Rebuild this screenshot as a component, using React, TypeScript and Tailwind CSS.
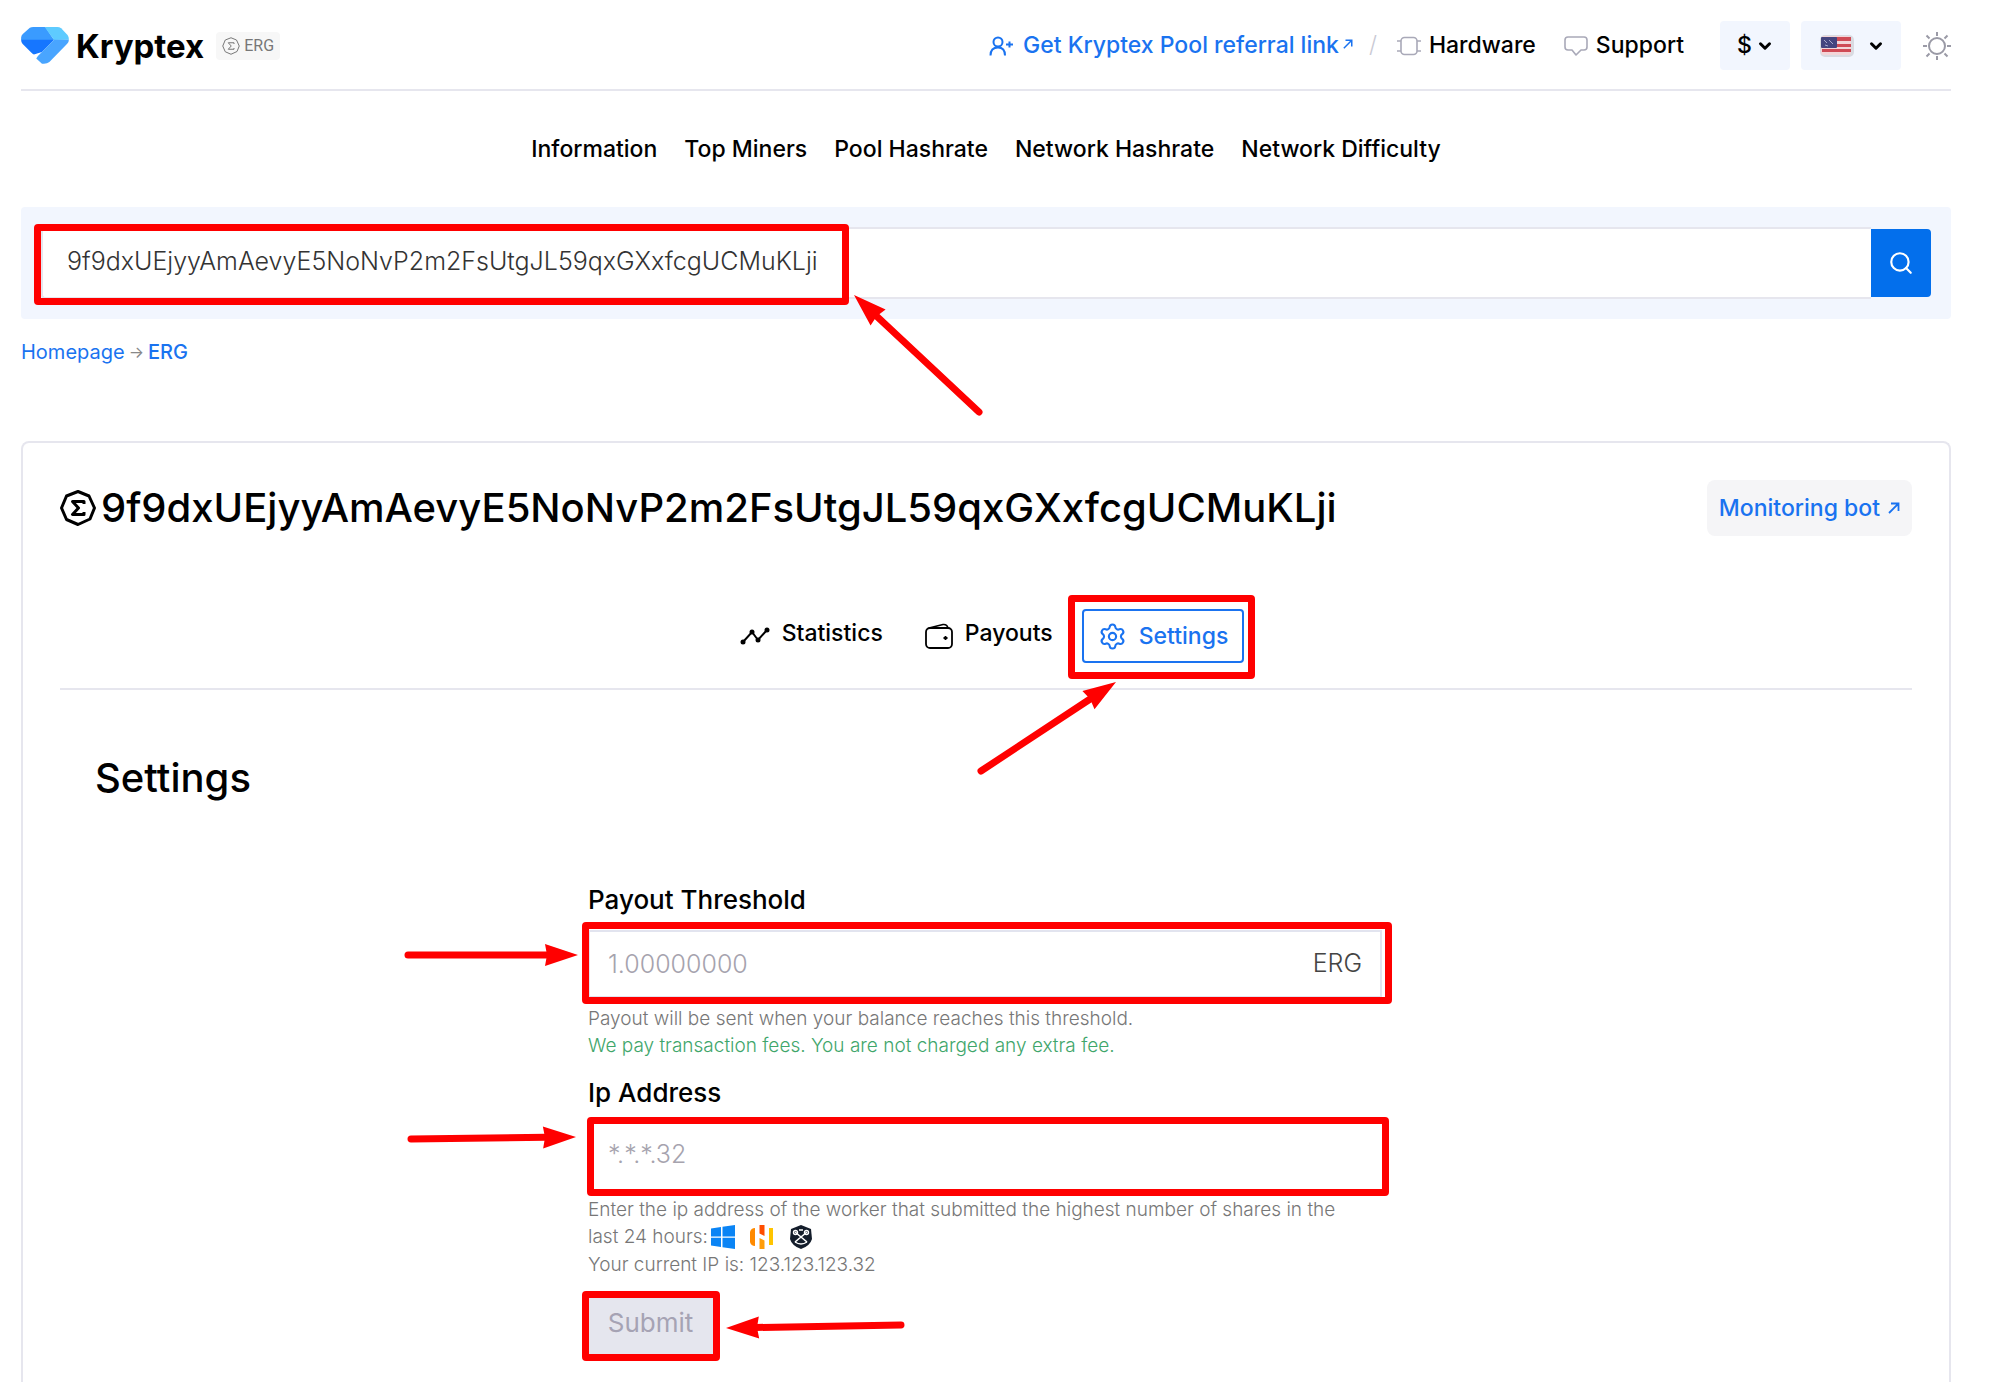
import { useState } from "react";
import type { ReactNode } from "react";
import { ChevronDown, Search, Settings } from "lucide-react";

const WALLET = "9f9dxUEjyyAmAevyE5NoNvP2m2FsUtgJL59qxGXxfcgUCMuKLji";

const NAV_ITEMS = ["Information", "Top Miners", "Pool Hashrate", "Network Hashrate", "Network Difficulty"];

/* ── Icons ── */

function KryptexLogo() {
  return (
    <svg viewBox="0 0 142 110" className="h-[37px] w-12 shrink-0" aria-hidden="true">
      <path d="M26 2 Q30 0 36 0 H72 L98 39 H0 V32 Q0 26 5 21 Z" fill="#3a9bff" />
      <path d="M70 0 H108 Q114 0 119 4 L138 24 Q142 29 142 38 L98 39 Z" fill="#5ecbff" />
      <path d="M0 38 H98 L62 74 L38 82 Q34 80 30 76 L4 50 Q0 45 0 38 Z" fill="#1676ff" />
      <path d="M98 38 H142 Q142 45 137 50 L84 104 Q76 111 62 109 L45 94 L50 86 Z" fill="#49a5ff" />
    </svg>
  );
}

function ErgIcon({ className, strokeWidth = 2 }: { className: string; strokeWidth?: number }) {
  return (
    <svg viewBox="0 0 36 36" fill="none" stroke="currentColor" strokeWidth={strokeWidth} strokeLinejoin="round" className={className} aria-hidden="true">
      <path d="M18 1.5 L29 6 L34.5 18 L30 29 L18 34.5 L6.500 29.500 L1.500 18 L6.500 6 Z" />
      <path d="M24 14 V11.500 H12.500 L18.500 18 L12.500 24.500 H24 V22" />
    </svg>
  );
}

function UserPlusIcon() {
  return (
    <svg viewBox="0 0 24 20" fill="none" stroke="currentColor" strokeWidth="2" className="h-5 w-6 shrink-0" aria-hidden="true">
      <circle cx="9" cy="6" r="4.500" />
      <path d="M1.500 19.500 C1.500 14 4.500 11.500 9 11.500 S16 14 16 19.500" />
      <path d="M17 8.500 H24 M20.500 5.500 V11.500" />
    </svg>
  );
}

function ArrowUpRight({ className }: { className: string }) {
  return (
    <svg viewBox="0 0 12 12" fill="none" stroke="currentColor" strokeWidth="1.800" className={className} aria-hidden="true">
      <path d="M1 11 L10.500 1.500 M3 1.500 H10.500 V9" />
    </svg>
  );
}

function ChipIcon() {
  return (
    <svg viewBox="0 0 24 20" fill="none" stroke="currentColor" strokeWidth="1.600" className="h-5 w-6 shrink-0" aria-hidden="true">
      <rect x="4" y="1.500" width="16" height="17" rx="3.500" />
      <path d="M0 5 H4 M0 15 H4 M20 5 H24 M20 15 H24" />
    </svg>
  );
}

function ChatIcon() {
  return (
    <svg viewBox="0 0 24 20" fill="none" stroke="currentColor" strokeWidth="1.600" strokeLinejoin="round" className="h-5 w-6 shrink-0" aria-hidden="true">
      <path d="M4 1 H20 Q23 1 23 4 V11 Q23 14 20 14 H17 L12 19 L8 14 H4 Q1 14 1 11 V4 Q1 1 4 1 Z" />
    </svg>
  );
}

function SunIcon() {
  return (
    <svg viewBox="0 0 28 28" fill="none" stroke="currentColor" strokeWidth="2" className="size-7" aria-hidden="true">
      <circle cx="14" cy="14" r="8" />
      <path d="M14 0 V4 M14 24 V28 M0 14 H4 M24 14 H28 M3.500 3.500 L6.500 6.500 M21.500 21.500 L24.500 24.500 M3.500 24.500 L6.500 21.500 M21.500 6.500 L24.500 3.500" />
    </svg>
  );
}

function FlagIcon() {
  return (
    <svg viewBox="0 0 34 22" className="h-[22px] w-[34px]" aria-hidden="true">
      <rect width="34" height="22" rx="5" fill="#d9dbe2" />
      <rect x="1" y="1" width="30" height="19" rx="3" fill="#f3d5d8" />
      <path d="M16 2 H31 V6 H16 Z M16 9 H31 V12 H16 Z M2 14 H31 V17 H2 Z" fill="#cf4a55" />
      <rect x="1" y="2" width="16" height="11" rx="1" fill="#45457f" />
      <path d="M4 5 L7 8 M9 5 L13 9 M5 10 L8 11" stroke="#a9a9cc" strokeWidth="1" />
    </svg>
  );
}

function StatsIcon() {
  return (
    <svg viewBox="0 0 30 18" className="h-[18px] w-[30px]" fill="none" stroke="currentColor" strokeWidth="2" aria-hidden="true">
      <path d="M3 15 L12 5 L18 13 L27 3" />
      <g fill="currentColor" stroke="none">
        <circle cx="3" cy="15" r="2.500" />
        <circle cx="12" cy="5" r="2.500" />
        <circle cx="18" cy="13" r="2.500" />
        <circle cx="27" cy="3" r="2.500" />
      </g>
    </svg>
  );
}

function WalletIcon() {
  return (
    <svg viewBox="0 0 28 26" className="h-[26px] w-7" fill="none" stroke="currentColor" strokeWidth="1.800" aria-hidden="true">
      <rect x="1" y="5" width="26" height="20" rx="4" />
      <path d="M4 5 L18 1.500 Q22 1 23 5" strokeWidth="1.500" />
      <path d="M18.500 15 H22.500 M20.500 13 V17" />
    </svg>
  );
}

function WindowsIcon() {
  return (
    <svg viewBox="0 0 24 24" className="size-6" fill="#0a84f5" aria-hidden="true">
      <path d="M0 3.500 L10 2 V11.500 H0 Z M11.500 1.800 L24 0 V11.500 H11.500 Z M0 12.800 H10 V22 L0 20.500 Z M11.500 12.800 H24 V24 L11.500 22.300 Z" />
    </svg>
  );
}

function HiveIcon() {
  return (
    <svg viewBox="0 0 24 24" className="size-6" aria-hidden="true">
      <path d="M0 7 Q1 3 5 3 V21 Q1 21 0 17 Z" fill="#ff8a00" />
      <path d="M9.500 0 H14.500 V11 L9.500 8.500 Z" fill="#ff4d00" />
      <path d="M9.500 13 L14.500 15.500 V24 H9.500 Z" fill="#ff9d0a" />
      <path d="M19 3 H23 V20 H19 Z" fill="#ffc400" />
    </svg>
  );
}

function RaveIcon() {
  return (
    <svg viewBox="0 0 24 24" className="size-6" aria-hidden="true">
      <path d="M12 0 L22 4 L23 14 Q21 21 12 24 Q3 21 1 14 L2 4 Z" fill="#141d2b" />
      <path d="M6 7 L18 17 M18 7 L6 17" stroke="#fff" strokeWidth="1.600" />
      <g fill="none" stroke="#fff" strokeWidth="1.400">
        <circle cx="6.500" cy="7.500" r="2" />
        <circle cx="17.500" cy="7.500" r="2" />
        <path d="M6 17 Q12 21 18 17 M10 5 H14" />
      </g>
    </svg>
  );
}

/* ── Red annotations ── */

function Highlight({ className }: { className: string }) {
  return <div className={`pointer-events-none absolute rounded-[4px] border-[7px] border-[#ff0000] ${className}`} />;
}

/** Arrow in local coordinates, from its tail to its tip */
function Arrow({ width, height, from, to, className }: { width: number; height: number; from: [number, number]; to: [number, number]; className: string }) {
  const angle = Math.atan2(to[1] - from[1], to[0] - from[0]);
  const cos = Math.cos(angle);
  const sin = Math.sin(angle);
  const at = (back: number, side: number) => `${to[0] - back * cos - side * sin},${to[1] - back * sin + side * cos}`;
  const [neckX, neckY] = at(30, 0).split(",");

  return (
    <svg width={width} height={height} className={`pointer-events-none absolute overflow-visible ${className}`} aria-hidden="true">
      <line x1={from[0]} y1={from[1]} x2={neckX} y2={neckY} stroke="#ff0000" strokeWidth="7" strokeLinecap="round" />
      <polygon points={`${to[0]},${to[1]} ${at(33, 11)} ${at(31, 0)} ${at(33, -11)}`} fill="#ff0000" />
    </svg>
  );
}

/* ── Page ── */

function Header() {
  return (
    <header className="flex items-center justify-between border-b-2 border-[#e6e6ee] pt-[21px] pb-[19px]">
      <div className="flex items-center">
        <a href="#" className="flex items-center gap-[7px] text-[33px] leading-[48px] font-bold">
          <KryptexLogo />
          Kryptex
        </a>
        <a href="#erg" className="ml-3 flex h-7 items-center gap-1 rounded bg-[#f7f7f7] px-[6px] font-[Roboto] text-base text-[#777]">
          <ErgIcon className="size-[18px]" />
          ERG
        </a>
      </div>

      <div className="flex items-center text-[23px] font-medium">
        <a href="#referral" className="flex items-center gap-[10px] text-[#1a73f0]">
          <UserPlusIcon />
          <span className="flex items-center gap-1">
            Get Kryptex Pool referral link
            <ArrowUpRight className="mb-1 size-[10px]" />
          </span>
        </a>
        <span className="mr-5 ml-4 font-light text-[#c9c9d4]">/</span>
        <a href="#hardware" className="flex items-center gap-2">
          <span className="text-[#a9a9b8]"><ChipIcon /></span>
          Hardware
        </a>
        <a href="#support" className="ml-7 flex items-center gap-2">
          <span className="text-[#a9a9b8]"><ChatIcon /></span>
          Support
        </a>
        <label className="relative ml-9 h-[49px] w-[70px] rounded bg-[#f2f6fe]">
          <select aria-label="Currency" className="h-full w-full appearance-none rounded bg-transparent pl-[17px]">
            <option>$</option>
          </select>
          <ChevronDown size={18} strokeWidth={4} className="pointer-events-none absolute top-4 right-4" />
        </label>
        <button aria-label="Language" className="ml-[11px] flex h-[49px] w-[100px] items-center justify-between rounded bg-[#f2f6fe] pr-4 pl-[19px]">
          <FlagIcon />
          <ChevronDown size={18} strokeWidth={4} />
        </button>
        <button aria-label="Toggle theme" className="ml-[22px] text-[#9a9aa6]">
          <SunIcon />
        </button>
      </div>
    </header>
  );
}

function SearchPanel() {
  const [query, setQuery] = useState(WALLET);

  return (
    <form className="relative mt-[42px] rounded bg-[#f2f6fe] p-5" onSubmit={(e) => e.preventDefault()}>
      <div className="flex h-[72px] items-center">
        <input
          aria-label="Wallet address"
          value={query}
          onChange={(e) => setQuery(e.target.value)}
          className="h-full min-w-0 flex-1 rounded-l border-2 border-r-0 border-[#e6e6ee] bg-white pb-1 pl-6 text-[25px] font-light text-[#333]"
        />
        <button aria-label="Search" className="flex h-[68px] w-[60px] items-center justify-center rounded-r bg-[#036fec] text-white">
          <Search size={26} strokeWidth={2} />
        </button>
      </div>
      <Highlight className="top-[17px] left-[13px] h-[81px] w-[815px]" />
      <Arrow width={126} height={117} from={[125, 117]} to={[0, 0]} className="top-[88px] left-[833px]" />
    </form>
  );
}

function Tab({ icon, label }: { icon: ReactNode; label: string }) {
  return (
    <button className="flex items-center gap-3">
      {icon}
      <span className="pb-[6px]">{label}</span>
    </button>
  );
}

function SettingsForm() {
  return (
    <form className="mx-auto w-full max-w-[796px]" onSubmit={(e) => e.preventDefault()}>
      <label htmlFor="threshold" className="block text-[26px] leading-8 font-medium">Payout Threshold</label>
      <div className="relative mt-[14px] mr-[2px] flex h-[68px] items-center border-2 border-[#e2e4ef] pr-[18px] pl-[18px] text-[25px] font-light">
        <input id="threshold" placeholder="1.00000000" className="h-full min-w-0 flex-1 placeholder:text-[#a6a3ae]" />
        <span className="text-[#444]">ERG</span>
        <Highlight className="-top-[10px] -left-2 h-[82px] w-[810px]" />
        <Arrow width={170} height={20} from={[0, 10]} to={[170, 10]} className="top-[13px] -left-[182px]" />
      </div>
      <p className="mt-[7px] text-[19px] leading-[27px] font-light text-[#777]">Payout will be sent when your balance reaches this threshold.</p>
      <p className="text-[19px] leading-[27px] font-light text-[#3fa66b]">We pay transaction fees. You are not charged any extra fee.</p>

      <label htmlFor="ip" className="mt-[18px] block text-[26px] leading-8 font-medium">Ip Address</label>
      <div className="relative mt-3 h-[72px] text-[25px] font-light">
        <input id="ip" placeholder="*.*.*.32" className="h-full w-full px-5 pb-[6px] placeholder:text-[#a6a3ae]" />
        <Highlight className="-top-1 -left-px h-[79px] w-[802px]" />
        <Arrow width={165} height={20} from={[0, 12]} to={[165, 10]} className="top-[6px] -left-[177px]" />
      </div>
      <p className="mt-[3px] text-[19px] leading-[27px] font-light text-[#777]">
        Enter the ip address of the worker that submitted the highest number of shares in the
        <br />
        <span className="flex items-center gap-[15px]">
          <span className="-mr-3">last 24 hours:</span>
          <WindowsIcon />
          <HiveIcon />
          <RaveIcon />
        </span>
      </p>
      <p className="text-[19px] leading-[30px] font-light text-[#777]">Your current IP is: 123.123.123.32</p>

      <div className="relative mt-[17px] w-fit">
        <button disabled className="h-[58px] w-[125px] bg-[#e5e6ee] pb-2 text-[26px] text-[#a6a3b4]">Submit</button>
        <Highlight className="-top-[6px] -left-[6px] h-[70px] w-[138px]" />
        <Arrow width={175} height={20} from={[175, 8]} to={[0, 11]} className="top-5 left-[138px]" />
      </div>
    </form>
  );
}

export default function App() {
  return (
    <div className="flex min-h-screen flex-col bg-white pr-[49px] pl-[21px] font-[Inter,sans-serif] text-black">
      <Header />

      <nav className="mt-[42px] flex justify-center gap-[27px] text-[23px] leading-8 font-medium">
        {NAV_ITEMS.map((item) => (
          <a key={item} href="#">{item}</a>
        ))}
      </nav>

      <SearchPanel />

      <div className="mt-[19px] flex items-center gap-1 text-[20px] leading-7 text-[#1a73f0]">
        <a href="#">Homepage</a>
        <span className="text-base text-[#888]">→</span>
        <a href="#" className="font-medium">ERG</a>
      </div>

      <main className="mt-[75px] flex-1 rounded-t-lg border-2 border-b-0 border-[#e6e6ee] px-[37px] pt-[37px]">
        <div className="flex items-center justify-between">
          <h1 className="flex items-center gap-[5px] text-[40px] leading-[56px] font-medium">
            <ErgIcon className="size-9" strokeWidth={3} />
            {WALLET}
          </h1>
          <a href="#bot" className="flex h-14 items-center gap-2 rounded-lg bg-[#f5f5f7] px-3 text-[23px] font-medium text-[#1a73f0]">
            Monitoring bot
            <ArrowUpRight className="size-3" />
          </a>
        </div>

        <div className="mt-[73px] flex items-center justify-center border-b-2 border-[#e6e6ee] pb-[25px] pl-3 text-[23px] font-medium">
          <Tab icon={<StatsIcon />} label="Statistics" />
          <div className="ml-[42px]">
            <Tab icon={<WalletIcon />} label="Payouts" />
          </div>
          <div className="relative ml-[29px]">
            <button className="flex h-[54px] items-center gap-3 rounded border-2 border-[#1a73f0] px-[14px] text-[#1a73f0]">
              <Settings size={29} strokeWidth={1.75} />
              Settings
            </button>
            <Highlight className="-top-[14px] -left-[14px] -right-[11px] h-[84px]" />
            <Arrow width={135} height={89} from={[0, 89]} to={[135, 0]} className="top-[73px] -left-[101px]" />
          </div>
        </div>

        <h2 className="mt-[62px] ml-[35px] text-[40px] leading-[52px] font-medium">Settings</h2>

        <div className="mt-20">
          <SettingsForm />
        </div>
      </main>
    </div>
  );
}
